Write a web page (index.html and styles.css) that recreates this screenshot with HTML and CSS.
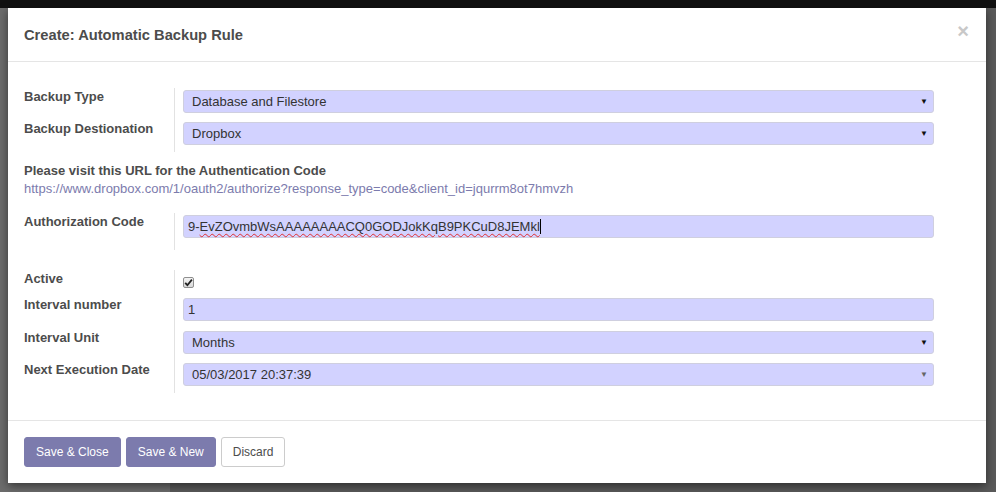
FILE: index.html
```html
<!DOCTYPE html>
<html>
<head>
<meta charset="utf-8">
<link rel="stylesheet" href="styles.css">
</head>
<body>
<div class="topbar"></div>
<div class="stage">
  <div class="modal">
    <div class="modal-header">
      <h4 class="modal-title">Create: Automatic Backup Rule</h4>
      <span class="close">×</span>
    </div>
    <div class="modal-body">
      <div class="group">
        <div class="row r32">
          <div class="lbl">Backup Type</div>
          <div class="val"><div class="field select">Database and Filestore<span class="arrow">▼</span></div></div>
        </div>
        <div class="row r32">
          <div class="lbl">Backup Destionation</div>
          <div class="val"><div class="field select">Dropbox<span class="arrow">▼</span></div></div>
        </div>
      </div>
      <div class="info">
        <div class="info-title">Please visit this URL for the Authentication Code</div>
        <a class="info-link">https://www.dropbox.com/1/oauth2/authorize?response_type=code&amp;client_id=jqurrm8ot7hmvzh</a>
      </div>
      <div class="group">
        <div class="row r37">
          <div class="lbl">Authorization Code</div>
          <div class="val"><div class="field input">9-<span class="spell">EvZOvmbWsAAAAAAAACQ0GODJokKqB9PKCuD8JEMkl</span><span class="caret"></span></div></div>
        </div>
      </div>
      <div class="group g3">
        <div class="row r26">
          <div class="lbl">Active</div>
          <div class="val"><span class="check"><svg width="9" height="9" viewBox="0 0 9 9"><path d="M1.2 4.8 L3.4 7.2 L7.9 1.6" fill="none" stroke="#222" stroke-width="1.8"/></svg></span></div>
        </div>
        <div class="row r33">
          <div class="lbl">Interval number</div>
          <div class="val"><div class="field input">1</div></div>
        </div>
        <div class="row r32">
          <div class="lbl">Interval Unit</div>
          <div class="val"><div class="field select">Months<span class="arrow">▼</span></div></div>
        </div>
        <div class="row r32">
          <div class="lbl">Next Execution Date</div>
          <div class="val"><div class="field select">05/03/2017 20:37:39<span class="arrow light">▼</span></div></div>
        </div>
      </div>
    </div>
    <div class="modal-footer">
      <button class="btn primary">Save &amp; Close</button>
      <button class="btn primary">Save &amp; New</button>
      <button class="btn default">Discard</button>
    </div>
  </div>
</div>
</body>
</html>
```
FILE: styles.css
```css
html, body {
  margin: 0;
  padding: 0;
}
body {
  width: 996px;
  height: 492px;
  overflow: hidden;
  background: linear-gradient(90deg, #6c6c6c 0, #6c6c6c 170px, #5a5a5a 170px, #5a5a5a 100%);
  font-family: "Liberation Sans", Arial, sans-serif;
  font-size: 13px;
  color: #4c4c4c;
}
.topbar {
  height: 8px;
  background: #111;
}
.stage {
  padding-left: 8px;
}
.modal {
  width: 978px;
  background: #fff;
  box-shadow: 0 3px 9px rgba(0, 0, 0, 0.5);
}
.modal-header {
  display: flex;
  justify-content: space-between;
  align-items: flex-start;
  padding: 18px 17px 17px 16px;
  border-bottom: 1px solid #e5e5e5;
}
.modal-title {
  margin: 0;
  font-size: 14.7px;
  line-height: 18px;
  font-weight: bold;
  color: #4c4c4c;
}
.close {
  font-size: 20px;
  line-height: 18px;
  font-weight: bold;
  color: #c8c8c8;
  margin-top: -4px;
}
.modal-body {
  padding: 26px 52px 27px 16px;
}
.group {
  display: flex;
  flex-direction: column;
}
.g3 {
  margin-top: 20px;
}
.row {
  display: flex;
}
.r26 { height: 26px; }
.r32 { height: 32px; }
.r33 { height: 33px; }
.r37 { height: 37px; }
.lbl {
  width: 151px;
  box-sizing: border-box;
  border-right: 1px solid #e2e2e2;
  font-weight: bold;
  line-height: 18px;
  color: #4c4c4c;
}
.val {
  flex: 1;
  padding-left: 8px;
  padding-top: 2px;
}
.field {
  position: relative;
  height: 23px;
  box-sizing: border-box;
  background: #d2d2ff;
  border: 1px solid #cfcfdf;
  border-radius: 3px;
  line-height: 21px;
  color: #333;
  white-space: nowrap;
}
.select {
  padding-left: 8px;
}
.input {
  padding-left: 4px;
}
.arrow {
  position: absolute;
  right: 5px;
  top: 0;
  font-size: 8px;
  color: #111;
}
.arrow.light {
  color: #666;
}
.spell {
  text-decoration: underline wavy #e03030;
  text-decoration-thickness: 1px;
  text-underline-offset: 2px;
}
.caret {
  display: inline-block;
  width: 1px;
  height: 15px;
  background: #000;
  vertical-align: -3px;
}
.info {
  padding-top: 10px;
  padding-bottom: 15px;
}
.info-title {
  font-weight: bold;
  line-height: 18px;
  color: #4c4c4c;
}
.info-link {
  display: block;
  line-height: 18px;
  color: #7c7bad;
  text-decoration: none;
}
.check {
  display: inline-flex;
  align-items: center;
  justify-content: center;
  width: 11px;
  height: 11px;
  box-sizing: border-box;
  margin-top: 5px;
  border: 1px solid #8f8f8f;
  border-radius: 2px;
  background: linear-gradient(#f4f4f4, #d8d8d8);
}
.modal-footer {
  display: flex;
  gap: 5px;
  padding: 16px;
  border-top: 1px solid #e5e5e5;
}
.btn {
  height: 30px;
  padding: 0 11px;
  font-family: "Liberation Sans", Arial, sans-serif;
  font-size: 12px;
  line-height: 28px;
  border-radius: 3px;
  cursor: pointer;
}
.primary {
  background: #7c7bad;
  border: 1px solid #7c7bad;
  color: #fff;
}
.default {
  background: #fff;
  border: 1px solid #ccc;
  color: #4c4c4c;
}
```
